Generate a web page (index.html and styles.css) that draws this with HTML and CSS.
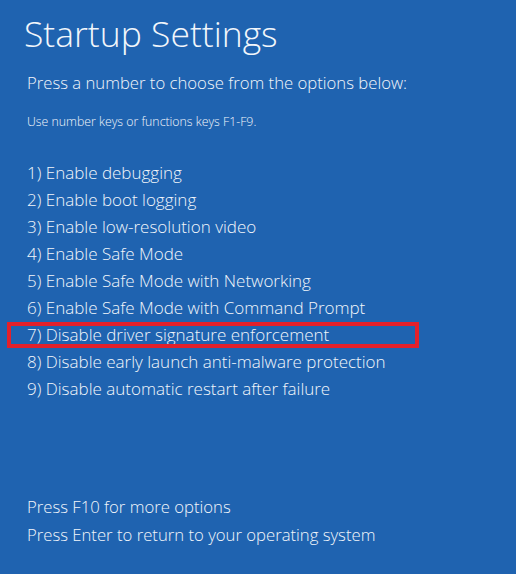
FILE: index.html
```html
<!DOCTYPE html>
<html lang="en">
<head>
  <meta charset="UTF-8">
  <title>Startup Settings</title>
  <link rel="stylesheet" href="styles.css">
</head>
<body>

<div class="screen">
  <h1 class="title">Startup Settings</h1>
  <p class="prompt">Press a number to choose from the options below:</p>
  <p class="hint">Use number keys or functions keys F1-F9.</p>

  <ul class="options">
    <li>1) Enable debugging</li>
    <li>2) Enable boot logging</li>
    <li>3) Enable low-resolution video</li>
    <li>4) Enable Safe Mode</li>
    <li>5) Enable Safe Mode with Networking</li>
    <li>6) Enable Safe Mode with Command Prompt</li>
    <li class="marked">7) Disable driver signature enforcement</li>
    <li>8) Disable early launch anti-malware protection</li>
    <li>9) Disable automatic restart after failure</li>
  </ul>

  <div class="footer">
    <p>Press F10 for more options</p>
    <p>Press Enter to return to your operating system</p>
  </div>
</div>

</body>
</html>
```

FILE: styles.css
```css
body {
  margin: 0;
  background: #1f63b0;
  font-family: 'Open Sans', 'Noto Sans', sans-serif;
  color: #f2f6fb;
}

.screen {
  height: 574px;
  padding: 0 0 0 27px;
  box-sizing: border-box;
  display: flex;
  flex-direction: column;
}

.title {
  margin: 8px 0 0 -3px;
  font-size: 35.5px;
  font-weight: 300;
  line-height: 50px;
}

.prompt {
  margin: 13px 0 0;
  font-size: 16.7px;
  font-weight: 300;
  line-height: 24px;
}

.hint {
  margin: 19px 0 0;
  font-size: 12.3px;
  font-weight: 300;
  line-height: 16px;
}

.options {
  list-style: none;
  margin: 29px 0 0;
  padding: 0;
  font-size: 17px;
  font-weight: 300;
  line-height: 27px;
}

.marked {
  position: relative;
}

.marked::after {
  content: '';
  position: absolute;
  left: -20px;
  top: 1px;
  width: 404px;
  height: 18px;
  border: 4px solid #e3202b;
}

.footer {
  margin-top: auto;
  padding-bottom: 25px;
  font-size: 16.7px;
  font-weight: 300;
  line-height: 28px;
}

.footer p {
  margin: 0;
}
```
